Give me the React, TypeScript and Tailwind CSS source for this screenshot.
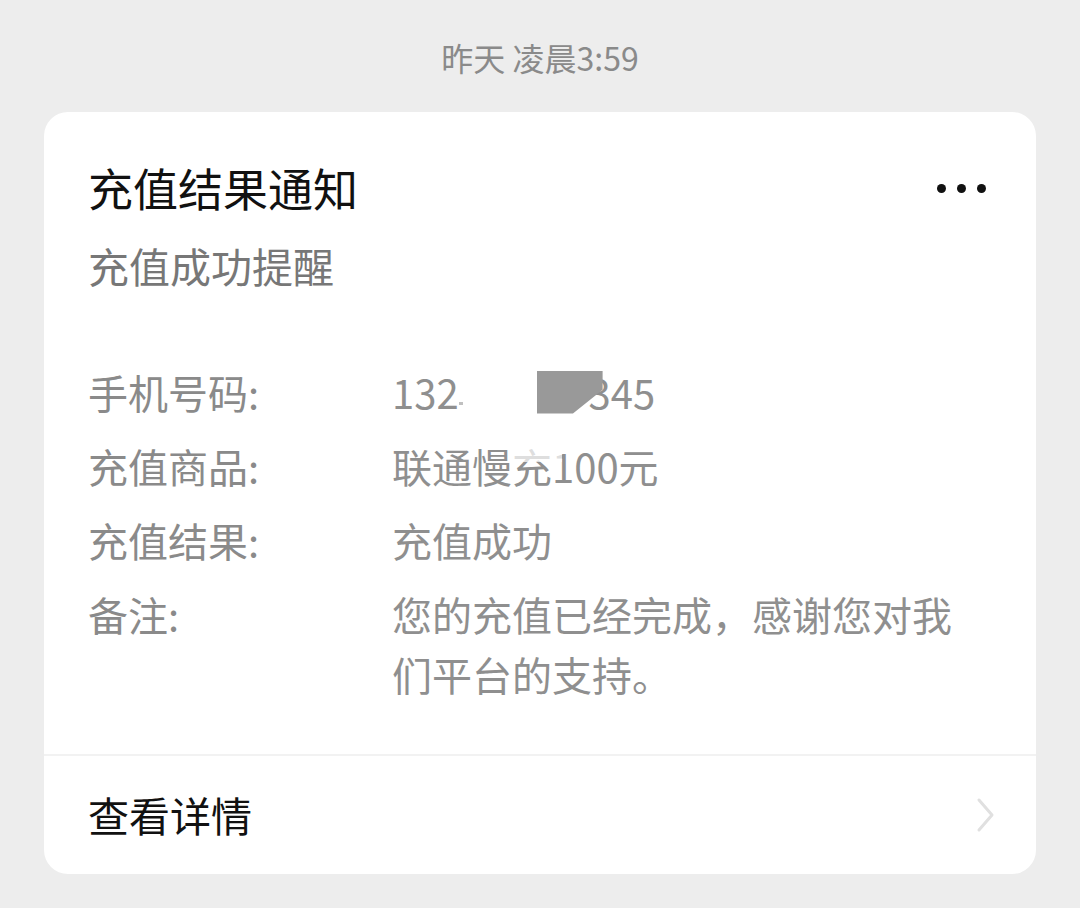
import React from "react";

const font = { fontFamily: '"Noto Sans CJK SC", "Noto Sans", sans-serif' };

function Row({ label, children }: { label: string; children: React.ReactNode }) {
  return (
    <div className="flex text-[40px] leading-[60px]">
      <div className="w-[304px] shrink-0 text-[#8a8a8a] h-[60px]">{label}</div>
      <div className="w-[566px] text-[#8f8f8f]">{children}</div>
    </div>
  );
}

export default function App() {
  return (
    <div style={font} className="w-[1080px] h-[908px] bg-[#ededed] flex flex-col items-center">
      <div className="mt-[37px] h-[40px] leading-[40px] text-[32px] text-[#8a8a8a]">昨天 凌晨3:59</div>
      <div className="mt-[35px] w-[992px] bg-white rounded-[24px] flex flex-col">
        <div className="px-[44px] pt-[48px] pb-[50px]">
          <div className="flex items-center justify-between">
            <div className="text-[45px] leading-[56px] text-[#111111]">充值结果通知</div>
            <div className="flex gap-[11px] mr-[6px]">
              <span className="w-[9px] h-[9px] rounded-full bg-[#111]" />
              <span className="w-[9px] h-[9px] rounded-full bg-[#111]" />
              <span className="w-[9px] h-[9px] rounded-full bg-[#111]" />
            </div>
          </div>
          <div className="mt-[21px] text-[41px] leading-[56px] text-[#777777]">充值成功提醒</div>
          <div className="mt-[69px] flex flex-col gap-[14px]">
            <Row label="手机号码:">
              <div className="flex items-center h-[60px]">
                <span>132</span>
                <span className="w-[4px] h-[3px] bg-[#c0c0c0] self-end mb-[17px]" />
                <span className="relative w-[66px] h-[43px] ml-[74px] bg-[#999999] z-10 [clip-path:polygon(0_0,100%_0,100%_45%,55%_100%,0_100%)]" />
                <span className="-ml-[14px]">345</span>
              </div>
            </Row>
            <Row label="充值商品:">
              <span className="relative inline-block">
                联通慢充100元
                <span className="absolute left-[122px] top-[12px] w-[48px] h-[14px] bg-white/70" />
              </span>
            </Row>
            <Row label="充值结果:">充值成功</Row>
            <Row label="备注:">您的充值已经完成，感谢您对我们平台的支持。</Row>
          </div>
        </div>
        <div className="h-[2px] bg-[#f2f2f2]" />
        <div className="h-[118px] pl-[44px] pr-[40px] flex items-center justify-between">
          <div className="text-[41px] text-[#111111]">查看详情</div>
          <svg width="20" height="36" viewBox="0 0 20 36">
            <path d="M3 3 L16 18 L3 33" fill="none" stroke="#e0e0e0" strokeWidth="3" strokeLinecap="round" strokeLinejoin="round" />
          </svg>
        </div>
      </div>
    </div>
  );
}
